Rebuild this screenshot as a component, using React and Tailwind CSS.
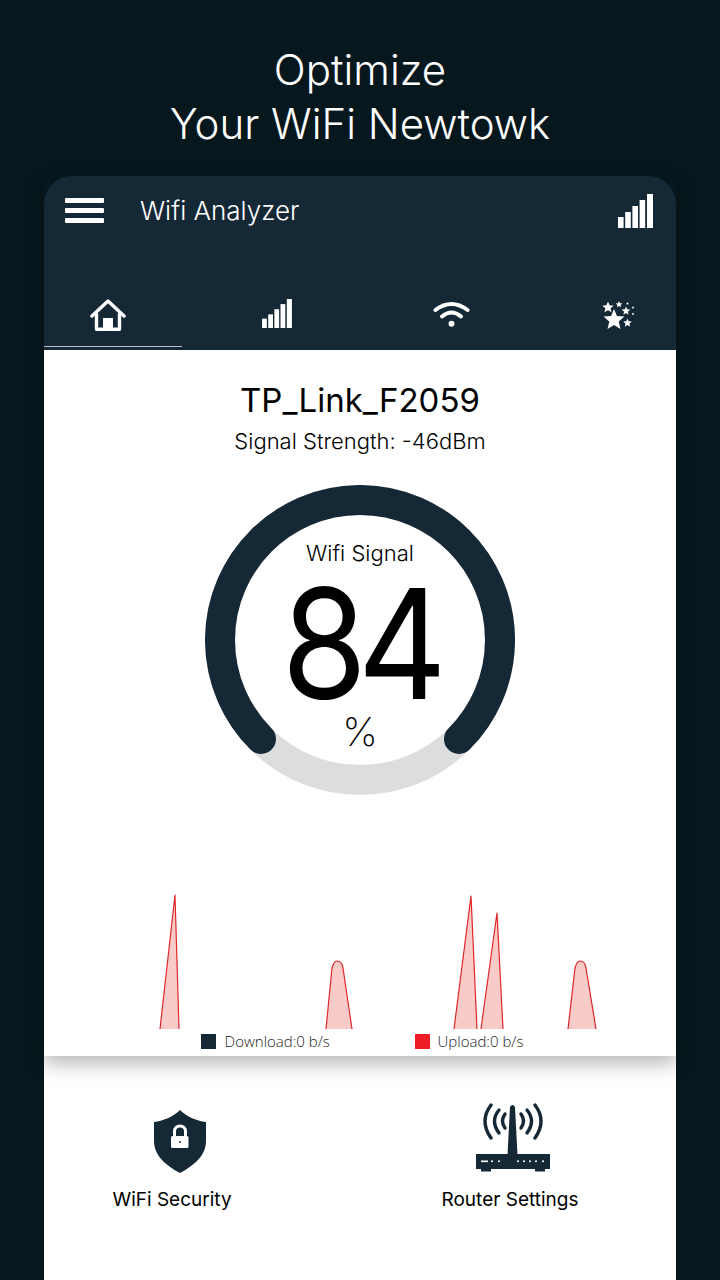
import React from "react";

const inter = "font-['Inter','Liberation_Sans',sans-serif]";

function Bars({ className }) {
    return (
        <svg viewBox="0 0 35 34" className={className} fill="#fff">
            <rect x="0" y="23" width="5.6" height="11" />
            <rect x="7.2" y="18" width="5.6" height="16" />
            <rect x="14.4" y="12" width="5.6" height="22" />
            <rect x="21.6" y="6" width="5.6" height="28" />
            <rect x="29" y="0" width="6" height="34" />
        </svg>
    );
}

function HomeIcon() {
    return (
        <svg viewBox="0 0 36 32" className="w-[36px] h-[32px]" fill="none" stroke="#fff" strokeWidth="3.4" strokeLinejoin="round" strokeLinecap="round">
            <path d="M2 17 L18 2 L34 17" />
            <path d="M6.5 15 V30.300 H29.500 V15" />
            <rect x="13" y="19" width="10" height="11" fill="#fff" stroke="none" />
        </svg>
    );
}

function WifiIcon() {
    return (
        <svg viewBox="0 0 37 26" className="w-[37px] h-[26px]" fill="none" stroke="#fff" strokeWidth="4" strokeLinecap="round">
            <path d="M2.500 9 Q18.500 -3 34.500 9" />
            <path d="M9 15.500 Q18.500 7.500 28 15.500" />
            <circle cx="18.500" cy="22.800" r="3" fill="#fff" stroke="none" />
        </svg>
    );
}

function star(cx, cy, r) {
    const pts = [];
    for (let i = 0; i < 10; i++) {
        const rad = i % 2 === 0 ? r : r * 0.45;
        const a = (Math.PI / 5) * i - Math.PI / 2;
        pts.push(`${(cx + rad * Math.cos(a)).toFixed(2)},${(cy + rad * Math.sin(a)).toFixed(2)}`);
    }
    return pts.join(" ");
}

function StarsIcon() {
    const stars = [
        [12, 19, 11],
        [6, 6.500, 6],
        [17, 3.500, 3.500],
        [24, 10, 4.500],
        [25.500, 22, 4.500],
        [25.500, 2.500, 1.600],
        [31, 6.500, 1.500],
        [31, 13, 1.500],
    ];
    return (
        <svg viewBox="0 0 33 29" className="w-[33px] h-[29px]" fill="#fff">
            {stars.map(([x, y, r], i) => (
                <polygon key={i} points={star(x, y, r)} />
            ))}
        </svg>
    );
}

function Gauge() {
    return (
        <div className="relative w-[310px] h-[310px]">
            <svg viewBox="0 0 310 310" className="w-[310px] h-[310px]" fill="none" strokeWidth="30">
                <circle cx="155" cy="155" r="140" stroke="#dcdddd" />
                <path d="M56 254 A140 140 0 1 1 254 254" stroke="#152836" strokeLinecap="round" />
            </svg>
            <div className={`absolute inset-0 flex flex-col items-center text-black ${inter}`}>
                <div className="mt-[54px] h-[28px] text-[22px] leading-[28px] font-[350]">Wifi Signal</div>
                <div className="h-[154px] text-[153px] leading-[154px] font-normal tracking-[-10px] scale-x-[0.9]">84</div>
                <div className="mt-[-11px] h-[44px] text-[40px] leading-[44px] font-extralight">%</div>
            </div>
        </div>
    );
}

function Chart() {
    const peaks = [
        "M116 135 L131 1 L135 135",
        "M282 135 L288 74 Q290 67 293 67 Q298 67 299 74 L308 135",
        "M410 135 L427 2 L433 135",
        "M437 135 L453 19 L459 135",
        "M524 135 L531 74 Q533 67 536 67 Q541 67 542 74 L552 135",
    ];
    return (
        <svg viewBox="0 0 632 136" className="block w-[632px] h-[136px]">
            {peaks.map((d, i) => (
                <path key={i} d={d} fill="#f9cbc8" stroke="#e0262a" strokeWidth="1.2" strokeLinejoin="round" />
            ))}
        </svg>
    );
}

function ShieldIcon() {
    return (
        <svg viewBox="0 0 52 63" className="w-[52px] h-[63px]">
            <path d="M26 0 C32 6 42 11 52 12 V31 C52 45 41 55 26 63 C11 55 0 45 0 31 V12 C10 11 20 6 26 0 Z" fill="#152836" />
            <path d="M20.500 27 V21.500 C20.500 18 23 16 26 16 C29 16 31.500 18 31.500 21.500 V27" fill="none" stroke="#fff" strokeWidth="3" />
            <rect x="17" y="26" width="17.500" height="12" rx="1.500" fill="#fff" />
            <circle cx="26" cy="32" r="1" fill="#152836" />
        </svg>
    );
}

function RouterIcon() {
    return (
        <svg viewBox="0 0 76 70" className="w-[76px] h-[70px]">
            <g fill="none" stroke="#152836" strokeWidth="3.400" strokeLinecap="round">
                <path d="M16 2 Q4 18 16 35" />
                <path d="M24 7 Q15 18 24 30" />
                <path d="M30 11 Q25 18 30 25" />
                <path d="M60 2 Q72 18 60 35" />
                <path d="M52 7 Q61 18 52 30" />
                <path d="M46 11 Q51 18 46 25" />
            </g>
            <path d="M35 4 Q37.500 0 40 4 L42.500 52 H32.500 Z" fill="#152836" />
            <rect x="1" y="51" width="74" height="15" fill="#152836" />
            <rect x="6" y="66" width="10" height="2.500" fill="#152836" />
            <rect x="60" y="66" width="10" height="2.500" fill="#152836" />
            <g fill="#fff">
                <rect x="6" y="57.500" width="7" height="1.600" />
                <circle cx="17" cy="58.300" r="1" />
                <circle cx="24" cy="58.300" r="1" />
                <circle cx="43" cy="58.300" r="1" />
                <circle cx="49" cy="58.300" r="1" />
                <circle cx="55" cy="58.300" r="1" />
                <circle cx="61" cy="58.300" r="1" />
                <circle cx="68" cy="58.300" r="1" />
            </g>
        </svg>
    );
}

export default function App() {
    return (
        <div className={`w-[720px] h-[1280px] overflow-hidden bg-[#06171d] flex flex-col items-center ${inter}`}>
            <h1 className="h-[176px] pt-[43px] text-center text-white text-[42px] leading-[54px] font-[350]">
                Optimize
                <br />
                Your WiFi Newtowk
            </h1>

            <div className="w-[632px] flex-1 flex flex-col">
                <div className="relative z-10 shadow-[0_8px_18px_rgba(0,0,0,0.28)]">
                    <header className="h-[174px] bg-[#152836] rounded-t-[28px] flex flex-col">
                        <div className="h-[69px] flex items-center pl-[21px] pr-[23px]">
                            <div className="w-[39px] flex flex-col gap-[5px]">
                                <div className="h-[5px] rounded-[1px] bg-white" />
                                <div className="h-[5px] rounded-[1px] bg-white" />
                                <div className="h-[5px] rounded-[1px] bg-white" />
                            </div>
                            <div className="ml-[36px] flex-1 text-white text-[26px] leading-[34px] font-[350]">Wifi Analyzer</div>
                            <Bars className="w-[35px] h-[34px]" />
                        </div>
                        <nav className="mt-[54px] flex h-[48px] text-white">
                            <div className="w-[138px] h-[48px] pr-[10px] flex justify-center border-b border-[#b9c0c5]">
                                <HomeIcon />
                            </div>
                            <div className="w-[190px] flex justify-center">
                                <Bars className="w-[30px] h-[29px]" />
                            </div>
                            <div className="w-[158px] pt-[2px] flex justify-center">
                                <WifiIcon />
                            </div>
                            <div className="w-[146px] pl-[30px] pt-[2px] flex justify-center">
                                <StarsIcon />
                            </div>
                        </nav>
                    </header>

                    <main className="h-[706px] bg-white flex flex-col items-center text-black">
                        <div className="mt-[27px] text-[33px] leading-[46px]">TP_Link_F2059</div>
                        <div className="mt-[3px] text-[22px] leading-[30px] font-[350]">Signal Strength: -46dBm</div>
                        <div className="mt-[29px]">
                            <Gauge />
                        </div>
                        <div className="mt-[99px]">
                            <Chart />
                        </div>
                        <div className="mt-[1px] flex text-[15px] leading-[20px] text-[#222] font-['Open_Sans',sans-serif] font-light">
                            <div className="w-[214px] ml-[4px] flex items-center gap-[9px]">
                                <span className="w-[15px] h-[15px] bg-[#152836]" />
                                Download:0 b/s
                            </div>
                            <div className="flex items-center gap-[8px]">
                                <span className="w-[15px] h-[15px] bg-[#ee1c25]" />
                                Upload:0 b/s
                            </div>
                        </div>
                    </main>
                </div>

                <section className="flex-1 bg-white flex pt-[54px] text-black">
                    <div className="w-[250px] pl-[6px] flex flex-col items-center">
                        <div className="ml-[16px]"><ShieldIcon /></div>
                        <div className="mt-[14px] text-[19px] leading-[26px]">WiFi Security</div>
                    </div>
                    <div className="w-[382px] pl-[50px] flex flex-col items-center">
                        <div className="mt-[-7px] ml-[5px]"><RouterIcon /></div>
                        <div className="mt-[14px] text-[19px] leading-[26px]">Router Settings</div>
                    </div>
                </section>
            </div>
        </div>
    );
}
